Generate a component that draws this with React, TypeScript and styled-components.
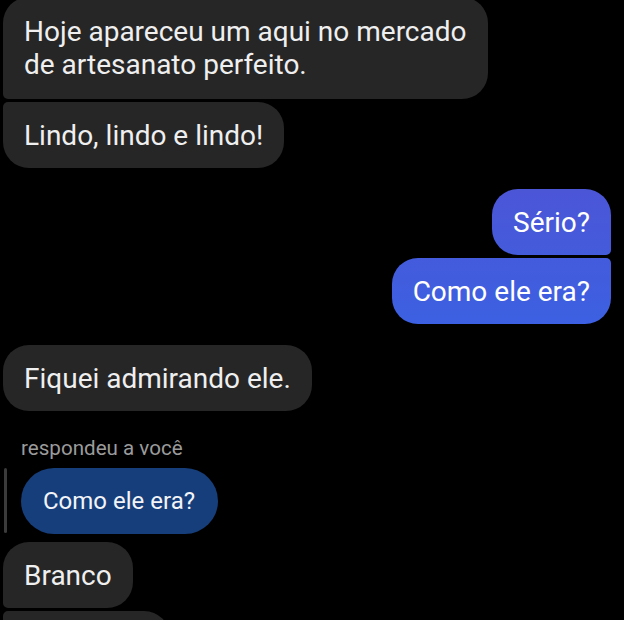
import React from "react";
import styled, { createGlobalStyle, css } from "styled-components";

const Global = createGlobalStyle`
  html, body {
    margin: 0;
    padding: 0;
    background: #000;
    overflow: hidden;
  }
  body {
    font-family: Roboto, "Noto Sans", "Liberation Sans", sans-serif;
  }
`;

const Thread = styled.div`
  display: flex;
  flex-direction: column;
  padding: 0 13px 0 3px;
  width: 624px;
  height: 620px;
  box-sizing: border-box;
  overflow: hidden;
`;

type Side = "in" | "out";
type Pos = "single" | "first" | "last";

const Group = styled.div<{ $side: Side; $gap: number }>`
  display: flex;
  flex-direction: column;
  align-items: ${(p) => (p.$side === "out" ? "flex-end" : "flex-start")};
  gap: 3px;
  margin-top: ${(p) => p.$gap}px;
`;

const R = 26;
const r = 5;

const radius = (side: Side, pos: Pos) => {
  if (pos === "single") return `${R}px`;
  if (side === "in") {
    return pos === "first"
      ? `${R}px ${R}px ${R}px ${r}px`
      : `${r}px ${R}px ${R}px ${R}px`;
  }
  return pos === "first"
    ? `${R}px ${R}px ${r}px ${R}px`
    : `${R}px ${r}px ${R}px ${R}px`;
};

const Bubble = styled.div<{ $side: Side; $pos: Pos; $tall?: boolean }>`
  box-sizing: border-box;
  max-width: 492px;
  padding: ${(p) => (p.$tall ? "18px" : "16.5px")} 21px;
  font-size: 28px;
  line-height: 33px;
  border-radius: ${(p) => radius(p.$side, p.$pos)};
  ${(p) =>
    p.$side === "in"
      ? css`
          background: #262626;
          color: #efefef;
        `
      : css`
          background: linear-gradient(180deg, #4c55d6 180px, #3b61e2 330px);
          background-attachment: fixed;
          color: #ffffff;
        `}
`;

const ReplyLabel = styled.div`
  margin: 25px 0 0 18px;
  font-size: 20.6px;
  line-height: 24px;
  color: #9b9b9b;
`;

const ReplyRow = styled.div`
  display: flex;
  align-items: stretch;
  gap: 14px;
  margin-top: 8px;
  padding-left: 1px;
`;

const ReplyBar = styled.div`
  width: 3px;
  margin-bottom: 1px;
  border-radius: 2px;
  background: #3b3b3b;
`;

const Quoted = styled.div`
  box-sizing: border-box;
  height: 66px;
  display: flex;
  align-items: center;
  padding: 0 23px 0 22px;
  border-radius: 33px;
  background: #163e7a;
  color: #f2f4f8;
  font-size: 24px;
`;

export default function App() {
  return (
    <>
      <Global />
      <Thread>
        <Group $side="in" $gap={-3}>
          <Bubble $side="in" $pos="first" $tall>
            Hoje apareceu um aqui no mercado
            <br />
            de artesanato perfeito.
          </Bubble>
          <Bubble $side="in" $pos="last">
            Lindo, lindo e lindo!
          </Bubble>
        </Group>
        <Group $side="out" $gap={21}>
          <Bubble $side="out" $pos="first">
            Sério?
          </Bubble>
          <Bubble $side="out" $pos="last">
            Como ele era?
          </Bubble>
        </Group>
        <Group $side="in" $gap={21}>
          <Bubble $side="in" $pos="single">
            Fiquei admirando ele.
          </Bubble>
        </Group>
        <ReplyLabel>respondeu a você</ReplyLabel>
        <ReplyRow>
          <ReplyBar />
          <Quoted>Como ele era?</Quoted>
        </ReplyRow>
        <Group $side="in" $gap={8}>
          <Bubble $side="in" $pos="first">
            Branco
          </Bubble>
          <Bubble $side="in" $pos="last">
            E grandão
          </Bubble>
        </Group>
      </Thread>
    </>
  );
}
